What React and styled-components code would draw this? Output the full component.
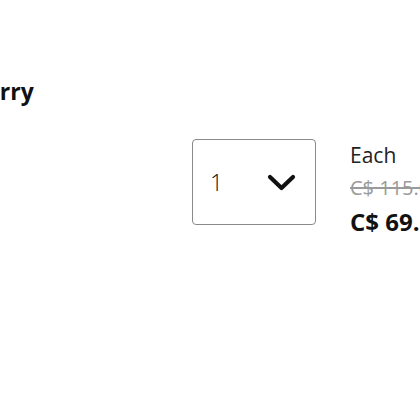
import styled, { createGlobalStyle } from "styled-components";

const Global = createGlobalStyle`
  html, body {
    margin: 0;
    padding: 0;
    background: #ffffff;
    font-family: "Open Sans", "Liberation Sans", sans-serif;
    color: #111;
    overflow: hidden;
  }
`;

const Page = styled.div`
  width: 420px;
  height: 420px;
  overflow: hidden;
`;

const Title = styled.h2`
  margin: 0;
  padding-top: 76px;
  margin-left: -95px;
  font-size: 23px;
  line-height: 31px;
  font-weight: 700;
  white-space: nowrap;
  color: #111;
`;

const Row = styled.div`
  display: flex;
  align-items: flex-start;
  margin-top: 32px;
  padding-left: 192px;
  gap: 34px;
`;

const Select = styled.div`
  box-sizing: border-box;
  flex-shrink: 0;
  width: 124px;
  height: 86px;
  border: 1px solid #8a8a8a;
  border-radius: 4px;
  display: flex;
  align-items: center;
  justify-content: space-between;
  padding: 0 19px 0 17px;
  font-size: 23px;
  font-weight: 300;
  color: #111;
`;

const Prices = styled.div`
  display: flex;
  flex-direction: column;
  flex-shrink: 0;
  white-space: nowrap;
`;

const Each = styled.div`
  font-size: 21px;
  line-height: 32px;
  color: #222;
`;

const Old = styled.div`
  font-size: 20px;
  line-height: 34px;
  color: #9a9a9a;
  text-decoration: line-through;
`;

const Now = styled.div`
  font-size: 24px;
  line-height: 34px;
  font-weight: 700;
  color: #111;
`;

export default function App() {
  return (
    <Page>
      <Global />
      <Title>Strawberry</Title>
      <Row>
        <Select>
          <span>1</span>
          <svg width="29" height="19" viewBox="0 0 29 19">
            <path d="M3 4 L14.5 15 L26 4" fill="none" stroke="#111" strokeWidth="4.2" strokeLinecap="round" strokeLinejoin="round" />
          </svg>
        </Select>
        <Prices>
          <Each>Each</Each>
          <Old>C$ 115.00</Old>
          <Now>C$ 69.00</Now>
        </Prices>
      </Row>
    </Page>
  );
}
